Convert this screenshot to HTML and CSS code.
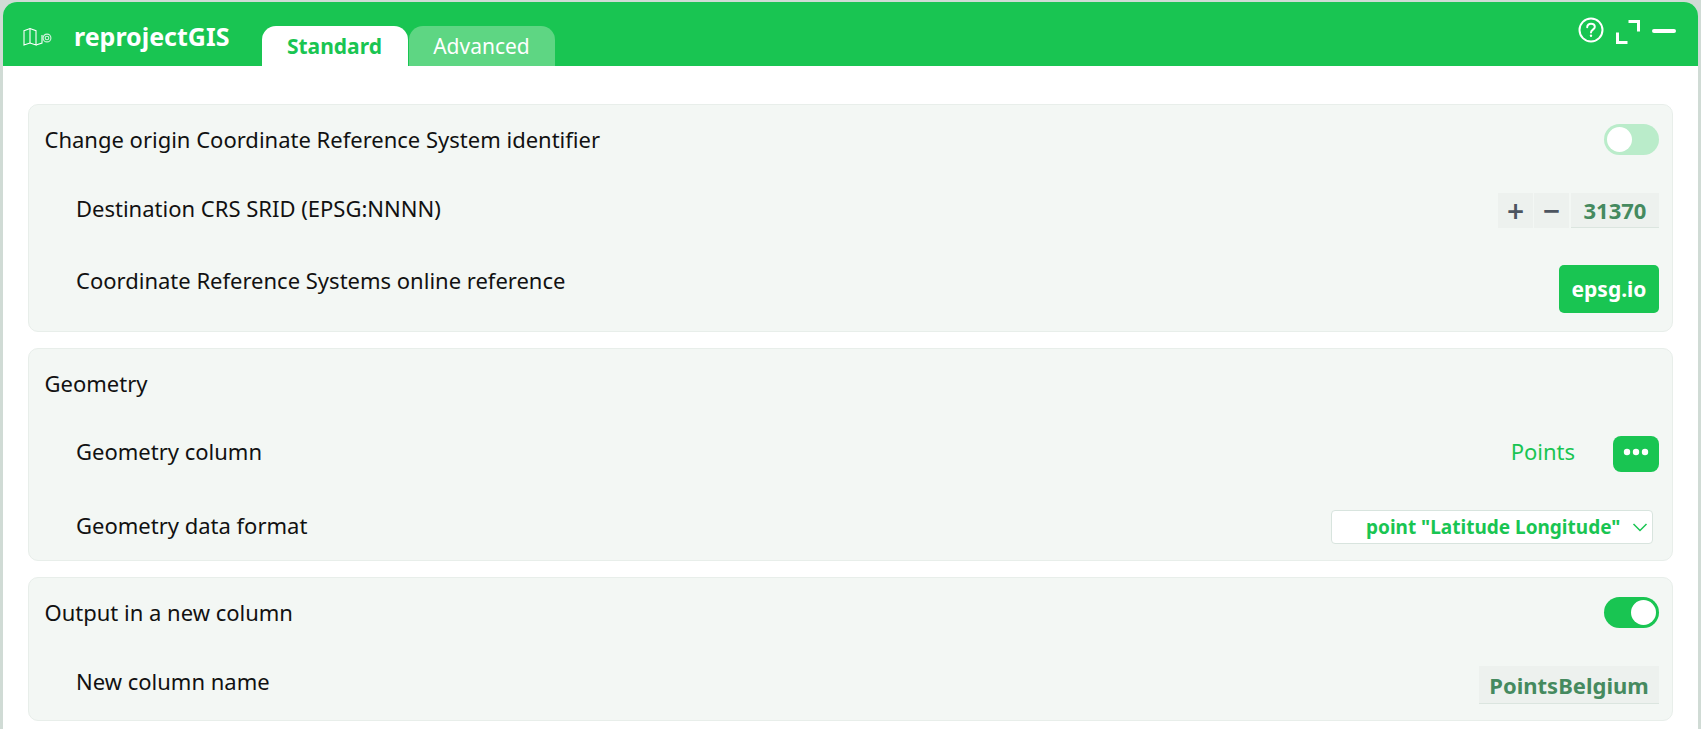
FILE: index.html
```html
<!DOCTYPE html>
<html lang="en">
<head>
    <meta charset="UTF-8">
    <title>reprojectGIS</title>
    <link rel="stylesheet" href="styles.css">
</head>
<body>

<div class="window">
    <header class="topbar">
        <svg class="app-icon" width="30" height="18" viewBox="0 0 30 18" fill="none" stroke="#fff" stroke-width="1.1">
            <path d="M1 2.7 L7 .6 L13 2.7 V17 L7 15 L1 17 Z"/>
            <path d="M7 .6 V15 M13 17 L19 15 V7"/>
            <circle cx="24" cy="10" r="3.9" stroke-opacity="0.8"/>
            <circle cx="24" cy="10" r="1.8" stroke-opacity="0.8"/>
        </svg>
        <span class="app-title">reprojectGIS</span>
        <nav class="tabs">
            <a class="tab active">Standard</a>
            <a class="tab">Advanced</a>
        </nav>
        <div class="actions">
            <svg width="26" height="26" viewBox="0 0 26 26" fill="none" stroke="#fff" stroke-width="2">
                <circle cx="13" cy="13" r="11.5"/>
                <path d="M9.2 10.2 C9.2 7.9 11 6.8 13 6.8 C15.2 6.8 16.8 8.1 16.8 10 C16.8 12.6 13 12.7 13 15.4" stroke-linecap="round"/>
                <circle cx="13" cy="18.8" r="1.2" fill="#fff" stroke="none"/>
            </svg>
            <svg class="expand" width="24" height="24" viewBox="0 0 24 24" fill="none" stroke="#fff" stroke-width="3">
                <path d="M12.5 1.5 H22.5 V11.5"/>
                <path d="M1.5 12.5 V22.5 H11.5"/>
            </svg>
            <svg class="minimize" width="24" height="6" viewBox="0 0 24 6" fill="none" stroke="#fff" stroke-width="4" stroke-linecap="round">
                <path d="M2 3 H22"/>
            </svg>
        </div>
    </header>

    <main class="content">
        <section class="card">
            <div class="row">
                <label>Change origin Coordinate Reference System identifier</label>
                <span class="switch"><span class="knob"></span></span>
            </div>
            <div class="row sub">
                <label>Destination CRS SRID (EPSG:NNNN)</label>
                <div class="stepper">
                    <button class="step-btn">+</button>
                    <button class="step-btn">&minus;</button>
                    <input class="text-value srid" type="text" value="31370">
                </div>
            </div>
            <div class="row sub">
                <label>Coordinate Reference Systems online reference</label>
                <button class="btn">epsg.io</button>
            </div>
        </section>

        <section class="card">
            <div class="row heading">
                <label>Geometry</label>
            </div>
            <div class="row sub tight">
                <label>Geometry column</label>
                <div class="column-pick">
                    <span class="column-name">Points</span>
                    <button class="dots-btn">
                        <svg width="26" height="8" viewBox="0 0 26 8" fill="#fff">
                            <circle cx="4" cy="4" r="3.2"/>
                            <circle cx="13" cy="4" r="3.2"/>
                            <circle cx="22" cy="4" r="3.2"/>
                        </svg>
                    </button>
                </div>
            </div>
            <div class="row sub">
                <label>Geometry data format</label>
                <div class="select-wrap">
                    <select class="format">
                        <option>point "Latitude Longitude"</option>
                    </select>
                    <svg class="chevron" width="16" height="9" viewBox="0 0 16 9" fill="none" stroke="#19c552" stroke-width="1.5">
                        <path d="M1.5 1 L8 7.5 L14.5 1"/>
                    </svg>
                </div>
            </div>
        </section>

        <section class="card">
            <div class="row">
                <label>Output in a new column</label>
                <span class="switch on"><span class="knob"></span></span>
            </div>
            <div class="row sub">
                <label>New column name</label>
                <input class="text-value new-name" type="text" value="PointsBelgium">
            </div>
        </section>
    </main>
</div>

</body>
</html>
```

FILE: styles.css
```css
* {
    box-sizing: border-box;
}

html, body {
    height: 100%;
}

body {
    margin: 0;
    padding: 2px 3px 0 3px;
    overflow: hidden;
    background-color: #d0dbd5;
    font-family: "Noto Sans", sans-serif;
    color: #111;
}

.window {
    background-color: #fff;
    border-radius: 14px 14px 0 0;
    height: 100%;
    overflow: hidden;
}

/* top bar */
.topbar {
    display: flex;
    height: 64px;
    padding-left: 20px;
    background-color: #19c552;
    color: #fff;
    position: relative;
}

.app-icon {
    margin-top: 26px;
}

.app-title {
    margin: 17px 0 0 21px;
    font-size: 25px;
    line-height: 34px;
    font-weight: 700;
}

.tabs {
    display: flex;
    align-self: flex-end;
    gap: 1px;
    margin-left: 33px;
}

.tab {
    width: 146px;
    height: 40px;
    padding: 3px 2px 0 0;
    border-radius: 14px 14px 0 0;
    background-color: #5ed683;
    text-align: center;
    font-size: 21px;
    line-height: 34px;
}

.tab.active {
    background-color: #fff;
    color: #19c552;
    font-weight: 700;
}

.actions {
    display: flex;
    margin-left: auto;
    padding: 15px 22px 0 0;
    gap: 11px;
}

.actions svg:first-child {
    margin: 0 1px 0 -1px;
}

.expand {
    margin-top: 3px;
}

.minimize {
    margin: 11px 0 0 1px;
}

/* settings cards */
.content {
    display: flex;
    flex-direction: column;
    gap: 16px;
    padding: 38px 25px 0 25px;
}

.card {
    padding: 19px 13px 16px 15.5px;
    background-color: #f3f7f4;
    border: 1px solid #e8eeea;
    border-radius: 10px;
}

.card:first-child {
    padding-bottom: 18px;
}

.row {
    display: flex;
    justify-content: space-between;
    align-items: flex-start;
    margin-bottom: 37px;
}

.row:last-child {
    margin-bottom: 0;
}

.row.heading {
    margin-bottom: 36px;
}

.row.tight {
    margin-bottom: 38px;
}

.row label {
    display: block;
    height: 32px;
    font-size: 22px;
    line-height: 30px;
}

.row.sub label {
    margin-left: 31.5px;
}

/* toggle */
.switch {
    display: block;
    width: 55px;
    height: 31px;
    padding: 3px;
    border-radius: 16px;
    background-color: #baecca;
}

.switch.on {
    background-color: #19c552;
}

.knob {
    display: block;
    width: 25px;
    height: 25px;
    border-radius: 50%;
    background-color: #fff;
}

.switch.on .knob {
    margin-left: 24px;
}

/* number and text fields */
.stepper {
    display: flex;
    gap: 1px;
}

.step-btn {
    width: 35px;
    height: 35px;
    padding: 0;
    border: none;
    background-color: #edf1ee;
    color: #4d5560;
    font-family: inherit;
    font-size: 30px;
    font-weight: 600;
    line-height: 33px;
}

.text-value {
    height: 35px;
    padding: 0;
    border: none;
    border-bottom: 1px solid #dbe5df;
    border-radius: 0;
    background-color: #edf1ee;
    color: #458a5f;
    font-family: inherit;
    font-size: 22px;
    font-weight: 700;
    text-align: center;
}

.srid {
    width: 88px;
    margin-left: 1px;
}

.new-name {
    width: 180px;
    height: 38px;
}

/* buttons */
.btn {
    width: 100px;
    height: 48px;
    padding: 0;
    border: none;
    border-radius: 5px;
    background-color: #19c552;
    color: #fff;
    font-family: inherit;
    font-size: 21px;
    font-weight: 700;
}

.column-pick {
    display: flex;
    align-items: flex-start;
}

.column-name {
    margin-right: 38px;
    color: #19c552;
    font-size: 22px;
    line-height: 30px;
}

.dots-btn {
    display: flex;
    justify-content: center;
    align-items: center;
    width: 46px;
    height: 36px;
    padding: 0 0 5px 0;
    border: none;
    border-radius: 8px;
    background-color: #19c552;
}

/* select */
.select-wrap {
    position: relative;
    margin-right: 6px;
}

.format {
    display: block;
    width: 322px;
    height: 34px;
    padding: 0 0 0 34px;
    border: 1px solid #d8e4de;
    border-radius: 4px;
    background-color: #fff;
    color: #19c552;
    font-family: inherit;
    font-size: 19px;
    font-weight: 700;
    appearance: none;
}

.chevron {
    position: absolute;
    top: 13px;
    right: 5px;
}
```
